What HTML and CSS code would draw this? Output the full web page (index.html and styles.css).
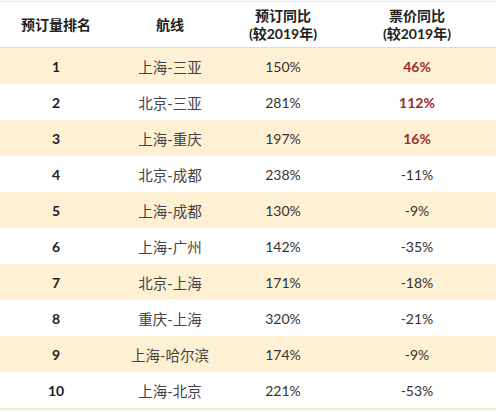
FILE: index.html
```html
<!DOCTYPE html>
<html lang="zh-CN">
<head>
<meta charset="UTF-8">
<title>预订量排名</title>
<link rel="stylesheet" href="styles.css">
</head>
<body>
<table class="rank-table">
<thead>
<tr>
<th class="col-rank">预订量排名</th>
<th class="col-route">航线</th>
<th class="col-book">预订同比<br>(较2019年)</th>
<th class="col-price">票价同比<br>(较2019年)</th>
</tr>
</thead>
<tbody>
<tr class="band"><td class="rank">1</td><td class="route">上海-三亚</td><td>150%</td><td class="up">46%</td></tr>
<tr><td class="rank">2</td><td class="route">北京-三亚</td><td>281%</td><td class="up">112%</td></tr>
<tr class="band"><td class="rank">3</td><td class="route">上海-重庆</td><td>197%</td><td class="up">16%</td></tr>
<tr><td class="rank">4</td><td class="route">北京-成都</td><td>238%</td><td>-11%</td></tr>
<tr class="band"><td class="rank">5</td><td class="route">上海-成都</td><td>130%</td><td>-9%</td></tr>
<tr><td class="rank">6</td><td class="route">上海-广州</td><td>142%</td><td>-35%</td></tr>
<tr class="band"><td class="rank">7</td><td class="route">北京-上海</td><td>171%</td><td>-18%</td></tr>
<tr><td class="rank">8</td><td class="route">重庆-上海</td><td>320%</td><td>-21%</td></tr>
<tr class="band"><td class="rank">9</td><td class="route">上海-哈尔滨</td><td>174%</td><td>-9%</td></tr>
<tr><td class="rank">10</td><td class="route">上海-北京</td><td>221%</td><td>-53%</td></tr>
</tbody>
</table>
</body>
</html>
```
FILE: styles.css
```css
body {
margin: 0;
background-color: #fff;
font-family: "Lato", "Noto Sans CJK SC", sans-serif;
}
.rank-table {
width: 496px;
margin-top: 1px;
border-collapse: collapse;
border-top: 1px solid #f1edcc;
border-bottom: 2px solid #eeeccb;
font-size: 14px;
color: #333;
}
.rank-table th {
height: 45px;
padding: 0;
line-height: 18px;
font-weight: bold;
color: #222;
text-align: center;
border-bottom: 1px solid #ecdcaa;
}
.col-rank { width: 112px; }
.col-route { width: 116px; }
.col-book { width: 110px; }
.rank-table td {
height: 36px;
padding: 0;
text-align: center;
}
.band td {
background-color: #fdf0d3;
}
.rank {
font-weight: bold;
color: #222;
}
.route {
color: #444;
font-size: 14.5px;
}
.up {
font-weight: bold;
color: #9c2a2c;
}
```
